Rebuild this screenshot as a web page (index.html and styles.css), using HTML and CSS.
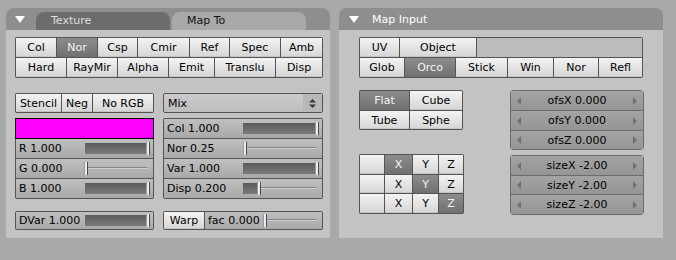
FILE: index.html
```html
<!DOCTYPE html>
<html lang="en">
<head>
    <meta charset="UTF-8">
    <title>Texture buttons</title>
    <link rel="stylesheet" href="styles.css">
</head>
<body>
    <div class="screen">
        <!-- Texture / Map To panel -->
        <div class="panel">
            <div class="panel-head">
                <span class="tri"></span>
                <div class="tab tab-dark">Texture</div>
                <div class="tab tab-light">Map To</div>
            </div>
            <div class="panel-body body-left">
                <div class="grp">
                    <div class="row row-mapto1">
                        <div class="btn">Col</div>
                        <div class="btn on">Nor</div>
                        <div class="btn">Csp</div>
                        <div class="btn">Cmir</div>
                        <div class="btn">Ref</div>
                        <div class="btn">Spec</div>
                        <div class="btn">Amb</div>
                    </div>
                    <div class="row row-mapto2">
                        <div class="btn">Hard</div>
                        <div class="btn">RayMir</div>
                        <div class="btn">Alpha</div>
                        <div class="btn">Emit</div>
                        <div class="btn">Translu</div>
                        <div class="btn">Disp</div>
                    </div>
                </div>

                <div class="cols cols-left">
                    <div class="col col-narrow">
                        <div class="grp">
                            <div class="row row-18 row-stencil">
                                <div class="btn">Stencil</div>
                                <div class="btn">Neg</div>
                                <div class="btn">No RGB</div>
                            </div>
                        </div>
                        <div class="swatch"></div>
                        <div class="grp grp-joined">
                            <div class="row row-one">
                                <div class="slider"><span class="lbl">R 1.000</span><div class="track"><div class="fill" style="width:100%"></div></div></div>
                            </div>
                            <div class="row row-one">
                                <div class="slider"><span class="lbl">G 0.000</span><div class="track"><div class="fill" style="width:0%"></div></div></div>
                            </div>
                            <div class="row row-one">
                                <div class="slider"><span class="lbl">B 1.000</span><div class="track"><div class="fill" style="width:100%"></div></div></div>
                            </div>
                        </div>
                        <div class="grp gap-bottom">
                            <div class="row row-17 row-one">
                                <div class="slider"><span class="lbl">DVar 1.000</span><div class="track"><div class="fill" style="width:100%"></div></div></div>
                            </div>
                        </div>
                    </div>

                    <div class="col col-wide">
                        <div class="menu">
                            <span>Mix</span>
                            <span class="menu-arrows">
                                <svg width="7" height="9" viewBox="0 0 7 9"><path d="M3.5 0 L7 3.5 L0 3.5 Z M0 5.5 L7 5.5 L3.5 9 Z" fill="#3a3a3a"/></svg>
                            </span>
                        </div>
                        <div class="grp grp-sliders">
                            <div class="row row-one">
                                <div class="slider"><span class="lbl">Col 1.000</span><div class="track"><div class="fill" style="width:100%"></div></div></div>
                            </div>
                            <div class="row row-one">
                                <div class="slider"><span class="lbl">Nor 0.25</span><div class="track"><div class="fill" style="width:1%"></div></div></div>
                            </div>
                            <div class="row row-one">
                                <div class="slider"><span class="lbl">Var 1.000</span><div class="track"><div class="fill" style="width:100%"></div></div></div>
                            </div>
                            <div class="row row-one">
                                <div class="slider"><span class="lbl">Disp 0.200</span><div class="track"><div class="fill" style="width:20%"></div></div></div>
                            </div>
                        </div>
                        <div class="grp gap-bottom">
                            <div class="row row-17 row-warp">
                                <div class="btn">Warp</div>
                                <div class="slider"><span class="lbl">fac 0.000</span><div class="track"><div class="fill" style="width:0%"></div></div></div>
                            </div>
                        </div>
                    </div>
                </div>
            </div>
        </div>

        <!-- Map Input panel -->
        <div class="panel">
            <div class="panel-head">
                <span class="tri tri-right"></span>
                <div class="head-title">Map Input</div>
            </div>
            <div class="panel-body body-right">
                <div class="grp">
                    <div class="row row-input1">
                        <div class="btn">UV</div>
                        <div class="btn">Object</div>
                        <div class="blank-field"></div>
                    </div>
                    <div class="row row-input2">
                        <div class="btn">Glob</div>
                        <div class="btn on">Orco</div>
                        <div class="btn">Stick</div>
                        <div class="btn">Win</div>
                        <div class="btn">Nor</div>
                        <div class="btn">Refl</div>
                    </div>
                </div>

                <div class="cols cols-right">
                    <div class="col">
                        <div class="grp">
                            <div class="row row-proj">
                                <div class="btn on">Flat</div>
                                <div class="btn">Cube</div>
                            </div>
                            <div class="row row-18 row-proj">
                                <div class="btn">Tube</div>
                                <div class="btn">Sphe</div>
                            </div>
                        </div>
                        <div class="grp grp-xyz">
                            <div class="row row-xyz">
                                <div class="btn"></div>
                                <div class="btn on">X</div>
                                <div class="btn">Y</div>
                                <div class="btn">Z</div>
                            </div>
                            <div class="row row-18 row-xyz">
                                <div class="btn"></div>
                                <div class="btn">X</div>
                                <div class="btn on">Y</div>
                                <div class="btn">Z</div>
                            </div>
                            <div class="row row-xyz">
                                <div class="btn"></div>
                                <div class="btn">X</div>
                                <div class="btn">Y</div>
                                <div class="btn on">Z</div>
                            </div>
                        </div>
                    </div>

                    <div class="col">
                        <div class="grp grp-num">
                            <div class="num"><span class="arr-l"></span>ofsX 0.000<span class="arr-r"></span></div>
                            <div class="num"><span class="arr-l"></span>ofsY 0.000<span class="arr-r"></span></div>
                            <div class="num num-18"><span class="arr-l"></span>ofsZ 0.000<span class="arr-r"></span></div>
                        </div>
                        <div class="grp grp-num grp-size">
                            <div class="num"><span class="arr-l"></span>sizeX -2.00<span class="arr-r"></span></div>
                            <div class="num num-18"><span class="arr-l"></span>sizeY -2.00<span class="arr-r"></span></div>
                            <div class="num"><span class="arr-l"></span>sizeZ -2.00<span class="arr-r"></span></div>
                        </div>
                    </div>
                </div>
            </div>
        </div>
    </div>
</body>
</html>
```

FILE: styles.css
```css
body {
    margin: 0;
    background-color: #a9a9a9;
    font-family: "DejaVu Sans", sans-serif;
    font-size: 11px;
    color: #000;
}
.screen {
    display: flex;
    gap: 9px;
    padding: 8px 0 0 6px;
}
.panel {
    width: 324px;
}
.panel-head {
    height: 22px;
    background: #8e8e8e;
    border-radius: 8px 8px 0 0;
    display: flex;
    align-items: flex-end;
}
.tri {
    width: 0;
    height: 0;
    border-left: 5px solid transparent;
    border-right: 5px solid transparent;
    border-top: 7px solid #fff;
    align-self: center;
    margin: 1px 11px 0 9px;
}
.tri-right {
    margin: 1px 13px 0 10px;
}
.head-title {
    color: #fff;
    align-self: center;
    margin-top: 1px;
}
.tab {
    width: 134px;
    height: 18px;
    line-height: 18px;
    padding-left: 15px;
    box-sizing: border-box;
    border-radius: 8px 8px 0 0;
}
.tab-dark {
    background: #6c6c6c;
    color: #dedede;
}
.tab-light {
    background: #a9a9a9;
    color: #111;
    margin-left: 2px;
}
.panel-body {
    background: #c3c3c3;
    height: 208px;
    box-sizing: border-box;
}
.body-left {
    padding: 7px 0 0 9px;
}
.body-right {
    padding: 7px 0 0 20px;
}

/* button groups */
.grp {
    display: flex;
    flex-direction: column;
    gap: 1px;
    padding: 1px;
    background: #545454;
    width: fit-content;
    border-radius: 2px;
}
.row {
    display: grid;
    gap: 1px;
    height: 19px;
}
.row-18 { height: 18px; }
.row-17 { height: 17px; }
.row-mapto1 { grid-template-columns: 40px 40px 39px 51px 39px 50px 41px; }
.row-mapto2 { grid-template-columns: 50px 50px 50px 45px 60px 46px; }
.row-stencil { grid-template-columns: 45px 30px 60px; }
.row-one { grid-template-columns: 1fr; }
.row-warp { grid-template-columns: 40px 1fr; }
.row-input1 { grid-template-columns: 39px 76px 165px; }
.row-input2 { grid-template-columns: 44px 50px 51px 45px 44px 43px; }
.row-proj { grid-template-columns: 49px 52px; }
.row-xyz { grid-template-columns: 24px 27px 25px 24px; }

.btn {
    display: flex;
    align-items: center;
    justify-content: center;
    background: linear-gradient(#f3f3f3, #d5d5d5);
    box-shadow: inset 0 -1px 0 #c4c4c4;
    white-space: nowrap;
}
.btn.on {
    background: linear-gradient(#8c8c8c, #707070);
    box-shadow: none;
    color: #f4f4f4;
}
.blank-field {
    background: #bcbcbc;
}

.cols {
    display: flex;
}
.cols-left {
    gap: 9px;
    margin-top: 15px;
}
.cols-right {
    gap: 46px;
    margin-top: 12px;
}
.col {
    display: flex;
    flex-direction: column;
}
.col-narrow { width: 139px; }
.col-wide { width: 160px; }
.col-narrow .grp,
.col-wide .grp {
    width: auto;
}

.swatch {
    margin-top: 5px;
    height: 19px;
    background: #ff00ff;
    border: 1px solid #000;
}
.grp-joined {
    padding-top: 0;
    border-radius: 0 0 2px 2px;
}
.grp-sliders {
    margin-top: 5px;
}
.gap-bottom {
    margin-top: 12px;
}

/* dropdown */
.menu {
    height: 18px;
    border: 1px solid #545454;
    border-radius: 2px;
    background: linear-gradient(#cbcbcb, #bdbdbd);
    display: flex;
    align-items: center;
    justify-content: space-between;
    padding-left: 4px;
}
.menu-arrows {
    width: 19px;
    height: 18px;
    background: #b8b8b8;
    display: flex;
    align-items: center;
    justify-content: center;
}

/* sliders */
.slider {
    display: flex;
    align-items: center;
    background: linear-gradient(#bfbfbf, #a9a9a9);
    white-space: nowrap;
}
.lbl {
    flex: 0 0 50%;
    padding-left: 3px;
    box-sizing: border-box;
}
.track {
    flex: 1;
    height: 11px;
    margin-right: 6px;
    background: linear-gradient(transparent 4px, #858585 4px, #858585 5px, #d2d2d2 5px, #d2d2d2 6px, transparent 6px);
}
.fill {
    position: relative;
    height: 100%;
    background: linear-gradient(#5a5a5a, #7a7a7a);
}
.fill::after {
    content: "";
    position: absolute;
    right: -3px;
    top: -1px;
    width: 2px;
    height: 13px;
    background: #ececec;
    border-left: 1px solid #9a9a9a;
    border-right: 1px solid #4a4a4a;
}

/* number fields */
.grp-xyz {
    margin-top: 24px;
}
.grp-num {
    width: 132px;
    background: #6b6b6b;
    border-radius: 4px;
}
.grp-size {
    margin-top: 5px;
}
.num {
    height: 19px;
    display: flex;
    align-items: center;
    justify-content: space-between;
    padding: 0 6px;
    background: linear-gradient(#a3a3a3, #959595);
}
.num-18 { height: 18px; }
.arr-l,
.arr-r {
    width: 0;
    height: 0;
    border-top: 4px solid transparent;
    border-bottom: 4px solid transparent;
}
.arr-l { border-right: 4px solid #707070; }
.arr-r { border-left: 4px solid #707070; }
```
